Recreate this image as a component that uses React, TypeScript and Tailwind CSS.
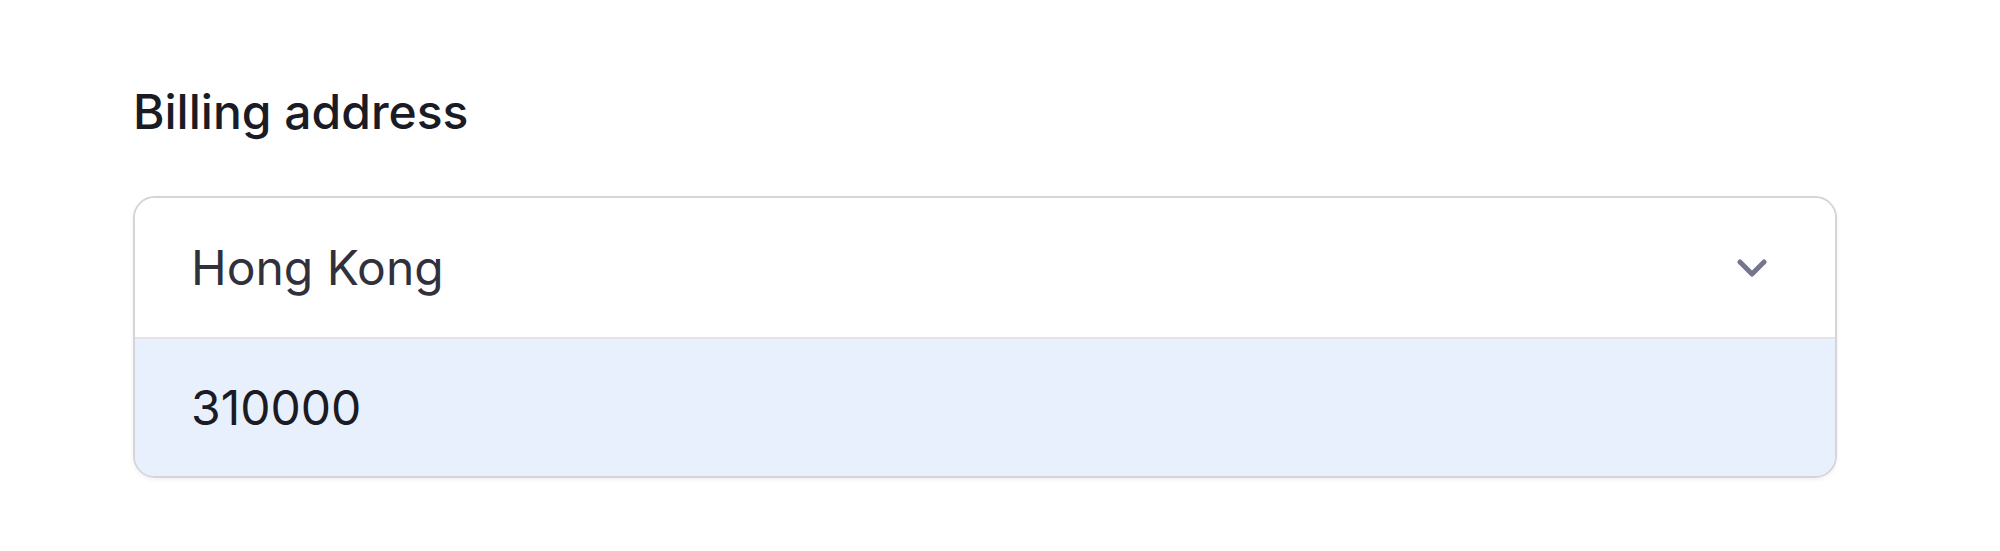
export default function App() {
  return (
    <div
      className="min-h-screen bg-white pl-[133px] pt-[84px]"
      style={{ fontFamily: "Inter, 'Noto Sans', sans-serif" }}
    >
      <div className="text-[48px] leading-[56px] font-medium text-[#1a1b25]">Billing address</div>
      <div className="mt-[56px] w-[1704px] rounded-[22px] border-2 border-[#d4d4da] overflow-hidden shadow-[0_2px_4px_rgba(0,0,0,0.06)]">
        <div className="h-[139px] flex items-center justify-between pl-[56px] pr-[68px] bg-white">
          <span className="text-[48px] text-[#30313d]">Hong Kong</span>
          <svg width="30" height="18" viewBox="0 0 30 18" fill="none">
            <path d="M3 3l12 12L27 3" stroke="#76758e" strokeWidth="5" strokeLinecap="round" strokeLinejoin="round" />
          </svg>
        </div>
        <div className="h-[139px] border-t-2 border-[#e3e3e8] bg-[#e8f0fe] flex items-center pl-[56px]">
          <span className="text-[48px] text-[#1a1b25]">310000</span>
        </div>
      </div>
    </div>
  );
}
